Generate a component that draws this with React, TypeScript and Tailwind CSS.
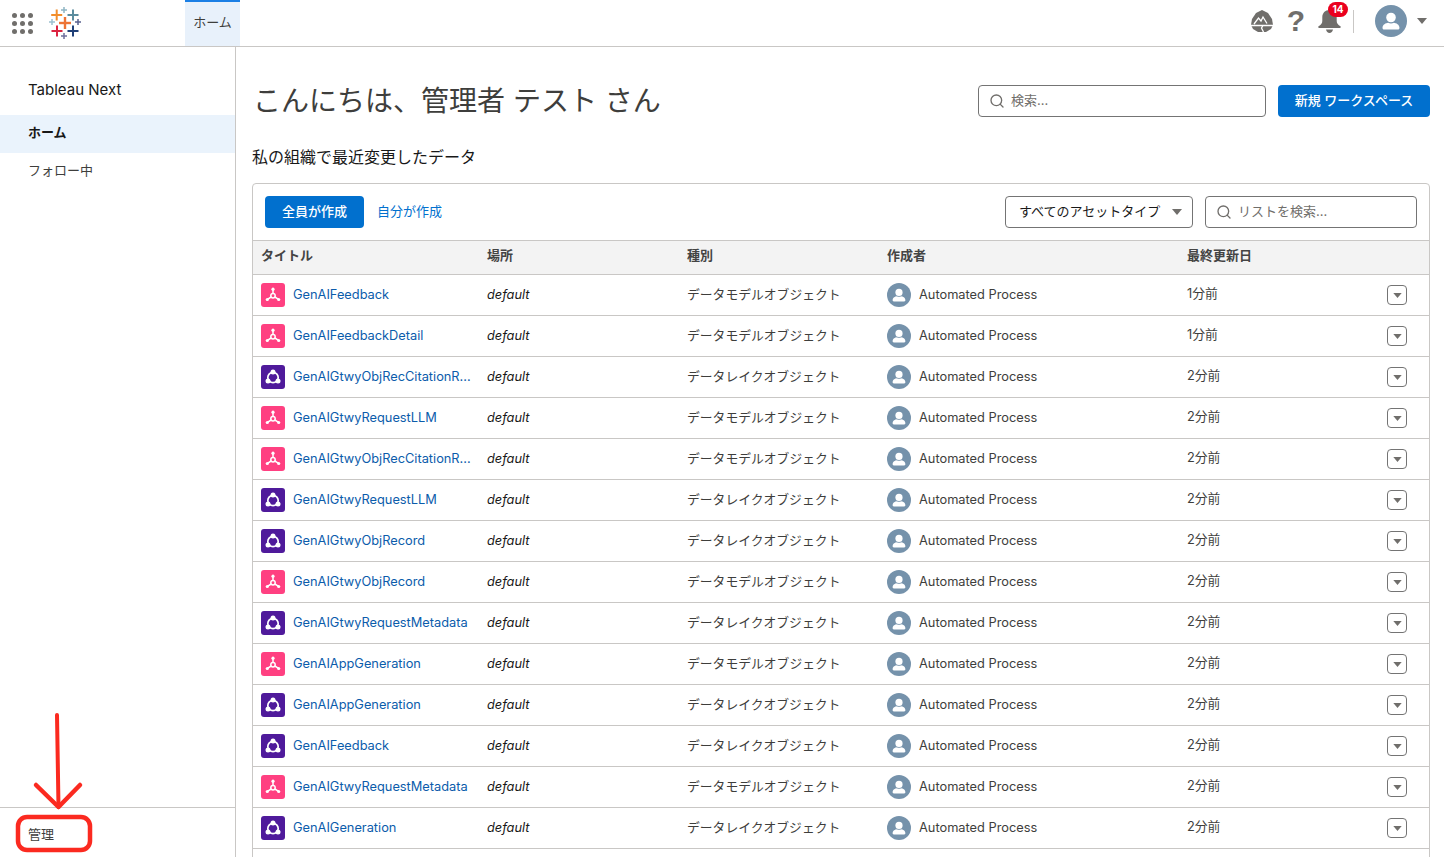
import React from "react";
import { Search } from "lucide-react";

const FONT = "font-['Inter','Noto_Sans_CJK_JP',sans-serif]";

type Row = { name: string; kind: "model" | "lake"; time: string };

const rows: Row[] = [
  { name: "GenAIFeedback", kind: "model", time: "1分前" },
  { name: "GenAIFeedbackDetail", kind: "model", time: "1分前" },
  { name: "GenAIGtwyObjRecCitationR...", kind: "lake", time: "2分前" },
  { name: "GenAIGtwyRequestLLM", kind: "model", time: "2分前" },
  { name: "GenAIGtwyObjRecCitationR...", kind: "model", time: "2分前" },
  { name: "GenAIGtwyRequestLLM", kind: "lake", time: "2分前" },
  { name: "GenAIGtwyObjRecord", kind: "lake", time: "2分前" },
  { name: "GenAIGtwyObjRecord", kind: "model", time: "2分前" },
  { name: "GenAIGtwyRequestMetadata", kind: "lake", time: "2分前" },
  { name: "GenAIAppGeneration", kind: "model", time: "2分前" },
  { name: "GenAIAppGeneration", kind: "lake", time: "2分前" },
  { name: "GenAIFeedback", kind: "lake", time: "2分前" },
  { name: "GenAIGtwyRequestMetadata", kind: "model", time: "2分前" },
  { name: "GenAIGeneration", kind: "lake", time: "2分前" },
];

function TableauLogo() {
  const marks: [number, number, number, number, string][] = [
    [8.7, 9, 11, 2, "#f28e2b"],
    [25, 9, 11, 2, "#5b8c9e"],
    [16, 4, 6, 1.5, "#8fb5c4"],
    [4, 16, 6, 1.5, "#9cc0cf"],
    [17, 17, 12, 2.4, "#ed7435"],
    [30, 16, 6, 1.5, "#59628f"],
    [9, 25, 11, 2, "#dc2340"],
    [25, 25, 11, 2, "#1f3f77"],
    [16, 30, 6, 1.5, "#6f6f9c"],
  ];
  return (
    <svg width="34" height="34" viewBox="0 0 34 34" className="shrink-0">
      {marks.map(([x, y, s, w, c], i) => (
        <g key={i} fill={c}>
          <rect x={x - s / 2} y={y - w / 2} width={s} height={w} />
          <rect x={x - w / 2} y={y - s / 2} width={w} height={s} />
        </g>
      ))}
    </svg>
  );
}

function AppGrid() {
  return (
    <div className="grid grid-cols-3 gap-[3px]">
      {Array.from({ length: 9 }).map((_, i) => (
        <span key={i} className="w-[5px] h-[5px] rounded-full bg-[#706e6b]" />
      ))}
    </div>
  );
}

function PersonAvatar({ size }: { size: number }) {
  return (
    <svg width={size} height={size} viewBox="0 0 32 32" className="shrink-0">
      <circle cx="16" cy="16" r="16" fill="#7592ab" />
      <circle cx="16" cy="12.5" r="4.8" fill="#fff" />
      <path d="M7.5 23c0-3.6 3.4-4.8 5.6-5.2 1.8.9 4 .9 5.800 0 2.200.4 5.600 1.600 5.600 5.200 0 .9-.7 1.500-1.500 1.500H9c-.8 0-1.500-.6-1.500-1.500z" fill="#fff" />
    </svg>
  );
}

function ObjectIcon({ kind }: { kind: Row["kind"] }) {
  if (kind === "model") {
    return (
      <span className="w-6 h-6 rounded-[3px] bg-[#ff4081] flex items-center justify-center shrink-0">
        <svg width="18" height="18" viewBox="0 0 18 18" fill="none" stroke="#fff" strokeWidth="1.5">
          <circle cx="9" cy="9.800" r="2.200" />
          <path d="M9 7.500V4M7.100 11 3.500 13.300M10.900 11 14.500 13.300" />
          <circle cx="9" cy="3.200" r="1.600" fill="#fff" stroke="none" />
          <circle cx="3.300" cy="13.500" r="1.600" fill="#fff" stroke="none" />
          <circle cx="14.700" cy="13.500" r="1.600" fill="#fff" stroke="none" />
        </svg>
      </span>
    );
  }
  return (
    <span className="w-6 h-6 rounded-[3px] bg-[#4f1a9b] flex items-center justify-center shrink-0">
      <svg width="20" height="20" viewBox="0 0 20 20" fill="none" stroke="#fff" strokeWidth="1.700">
        <circle cx="10" cy="10.500" r="5.200" />
        <circle cx="10" cy="5" r="2.500" fill="#fff" stroke="none" />
        <circle cx="5" cy="14" r="2.500" fill="#fff" stroke="none" />
        <circle cx="15" cy="14" r="2.500" fill="#fff" stroke="none" />
      </svg>
    </span>
  );
}

function Caret({ className }: { className: string }) {
  return (
    <svg viewBox="0 0 10 6" className={className}>
      <path d="M0 0h10L5 6z" fill="#706e6b" />
    </svg>
  );
}

function TrailheadIcon() {
  return (
    <svg width="22" height="22" viewBox="0 0 22 22" className="shrink-0">
      <path d="M11 0 17 3 21 9 22 15 20 19 15 22H7L2 19 0 15 1 9 5 3Z" fill="#706e6b" />
      <path d="M3 14 7.500 8 10 11 12 7 16 13.500M0 15.500H22M12 15.500 10.500 18 12.500 22" fill="none" stroke="#fff" strokeWidth="1.300" />
    </svg>
  );
}

function BellIcon() {
  return (
    <svg width="25" height="25" viewBox="0 0 25 25" className="block">
      <path d="M12.500 1C8 1 5.300 4.200 5.300 8.400V12c0 2.400-1.500 3.800-3.700 5.300-.8.600-.4 1.700.6 1.700h20.600c1 0 1.400-1.100.6-1.700-2.200-1.500-3.700-2.900-3.700-5.300V8.400C19.700 4.200 17 1 12.500 1z" fill="#706e6b" />
      <path d="M9 20.500h7c-.4 2.300-1.800 3.500-3.500 3.500S9.400 22.800 9 20.500z" fill="#706e6b" />
    </svg>
  );
}

function Header() {
  return (
    <header className="h-[47px] shrink-0 border-b border-[#c9c7c5] flex items-stretch bg-white">
      <div className="w-[185px] flex items-center pl-[12px] gap-[15px] shrink-0">
        <AppGrid />
        <span className="-mt-[1px]">
          <TableauLogo />
        </span>
      </div>
      <div className="w-[55px] bg-[#e8f1fb] border-t-2 border-[#1b7fe5] flex items-center justify-center text-[13px] text-[#3e3e3c] pb-[3px]">
        ホーム
      </div>
      <div className="flex-1" />
      <div className="flex items-center pr-[17px] pb-[4px]">
        <TrailheadIcon />
        <span className="w-[16px] ml-[15px] flex justify-center text-[30px] font-bold leading-none text-[#706e6b] font-['Liberation_Sans',sans-serif]">?</span>
        <div className="relative ml-[13px]">
          <BellIcon />
          <span className="absolute -top-[7px] left-[11px] w-[20px] h-[15px] rounded-full bg-[#ea001e] text-white text-[10px] font-bold leading-[15px] text-center">14</span>
        </div>
        <span className="w-px h-[23px] bg-[#c9c7c5] ml-[11px]" />
        <span className="ml-[21px]">
          <PersonAvatar size={32} />
        </span>
        <Caret className="w-[10px] h-[6px] ml-[10px]" />
      </div>
    </header>
  );
}

function Sidebar() {
  return (
    <aside className="w-[236px] shrink-0 border-r border-[#c9c7c5] flex flex-col text-[#181818]">
      <div className="pt-[32px] pl-[28px] pb-[14px] text-[15px] leading-[22px]">Tableau Next</div>
      <div className="h-[38px] bg-[#eaf3fc] pl-[28px] pb-[3px] flex items-center text-[13px] font-bold">ホーム</div>
      <div className="h-[38px] pl-[28px] pb-[2px] flex items-center text-[13px] text-[#3e3e3c]">フォロー中</div>
      <div className="flex-1" />
      <div className="h-[50px] border-t border-[#c9c7c5] pl-[28px] pt-[5px] flex items-center text-[13px] text-[#3e3e3c]">管理</div>
    </aside>
  );
}

function SearchBox({ width, placeholder }: { width: string; placeholder: string }) {
  return (
    <div className={`${width} h-[32px] pl-[10px] rounded-[4px] border border-[#747474] bg-white flex items-center text-[13px] text-[#706e6b] gap-[6px]`}>
      <Search size={16} strokeWidth={2} className="text-[#706e6b] shrink-0" />
      {placeholder}
    </div>
  );
}

const gridCols = "grid grid-cols-[234px_200px_200px_300px_200px_1fr]";

function DataRow({ row }: { row: Row }) {
  return (
    <div className={`${gridCols} h-[41px] border-b border-[#c9c7c5] items-center text-[12.8px] text-[#181818]`}>
      <div className="pl-[8px] flex items-center gap-[8px] min-w-0">
        <ObjectIcon kind={row.kind} />
        <span className="text-[#0b5cab] whitespace-nowrap">{row.name}</span>
      </div>
      <div className="italic">default</div>
      <div className="text-[#3e3e3c] pb-[1px]">{row.kind === "model" ? "データモデルオブジェクト" : "データレイクオブジェクト"}</div>
      <div className="flex items-center gap-[8px] text-[#3e3e3c]">
        <PersonAvatar size={24} />
        Automated Process
      </div>
      <div className="text-[#3e3e3c] pb-[2px]">{row.time}</div>
      <div>
        <span className="w-[20px] h-[20px] rounded-[4px] border border-[#747474] flex items-center justify-center">
          <Caret className="w-[9px] h-[5px]" />
        </span>
      </div>
    </div>
  );
}

function Main() {
  return (
    <main className="flex-1 min-w-0 pl-[16px] pr-[14px]">
      <div className="flex items-start justify-between pt-[38px]">
        <h1 className="pl-[3px] mt-[1px] text-[28px] leading-[30px] text-[#3e3e3c] font-normal -ml-[2px]">こんにちは、管理者 テスト さん</h1>
        <div className="flex items-center gap-[12px]">
          <SearchBox width="w-[288px]" placeholder="検索..." />
          <button className="w-[152px] h-[32px] rounded-[4px] bg-[#0170ce] text-white text-[13px] font-medium">新規 ワークスペース</button>
        </div>
      </div>
      <div className="mt-[29px] text-[16px] leading-[22px] text-[#181818]">私の組織で最近変更したデータ</div>
      <section className="mt-[15px] border border-[#c9c7c5] rounded-t-[4px] bg-white">
        <div className="h-[56px] flex items-center pl-[12px] pr-[12px]">
          <button className="w-[99px] h-[32px] rounded-[4px] bg-[#0170ce] text-white text-[13px] font-medium">全員が作成</button>
          <span className="ml-[13px] text-[13px] text-[#0170ce]">自分が作成</span>
          <div className="flex-1" />
          <div className="w-[188px] h-[32px] rounded-[4px] border border-[#747474] flex items-center justify-between pl-[13px] pr-[10px] text-[13px] text-[#181818]">
            すべてのアセットタイプ
            <Caret className="w-[10px] h-[6px]" />
          </div>
          <div className="w-[12px]" />
          <SearchBox width="w-[212px]" placeholder="リストを検索..." />
        </div>
        <div className={`${gridCols} h-[35px] pb-[4px] bg-[#f3f3f3] border-y border-[#c9c7c5] items-center text-[13px] font-bold text-[#444444]`}>
          <div className="pl-[8px]">タイトル</div>
          <div>場所</div>
          <div>種別</div>
          <div>作成者</div>
          <div>最終更新日</div>
          <div />
        </div>
        {rows.map((row, i) => (
          <DataRow key={i} row={row} />
        ))}
        <div className="h-[41px]" />
      </section>
    </main>
  );
}

export default function App() {
  return (
    <div className={`relative w-[1444px] h-[857px] overflow-hidden bg-white flex flex-col ${FONT}`}>
      <Header />
      <div className="flex flex-1 min-h-0">
        <Sidebar />
        <Main />
      </div>
      {/* red annotation over the admin link */}
      <svg width="100" height="150" viewBox="0 0 100 150" fill="none" stroke="#fb2a20" className="absolute left-0 top-[707px]">
        <path d="M57 8 L58.500 100" strokeWidth="4" strokeLinecap="round" />
        <path d="M36 78 L58.500 100 L80 78" strokeWidth="4.500" strokeLinecap="round" strokeLinejoin="round" />
        <rect x="18" y="110" width="72" height="33" rx="9" strokeWidth="4.500" />
      </svg>
    </div>
  );
}
